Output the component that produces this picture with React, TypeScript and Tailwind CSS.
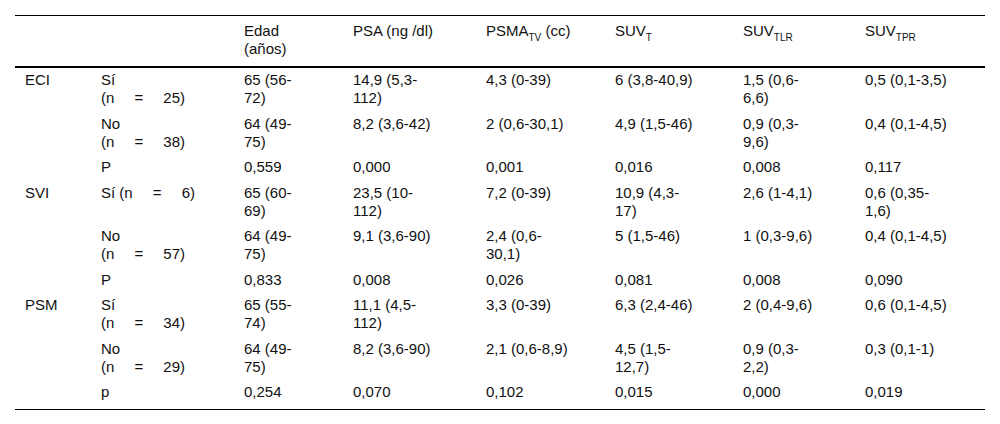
import React from "react";

type Cell = React.ReactNode;

const W = [60, 85, 86, 80, 75, 86];

function NJ({ a, b, c, w = 84 }: { a: string; b: string; c: string; w?: number }) {
  return (
    <div className="flex justify-between" style={{ width: w }}>
      <span>{a}</span>
      <span>{b}</span>
      <span>{c}</span>
    </div>
  );
}

function Group({ n }: { n: string }) {
  return (
    <div>
      <div>Sí</div>
      <NJ a="(n" b="=" c={n} />
    </div>
  );
}
function GroupNo({ n }: { n: string }) {
  return (
    <div>
      <div>No</div>
      <NJ a="(n" b="=" c={n} />
    </div>
  );
}

const rows: { g: string; s: Cell; v: string[] }[] = [
  { g: "ECI", s: <Group n="25)" />, v: ["65 (56-72)", "14,9 (5,3-112)", "4,3 (0-39)", "6 (3,8-40,9)", "1,5 (0,6-6,6)", "0,5 (0,1-3,5)"] },
  { g: "", s: <GroupNo n="38)" />, v: ["64 (49-75)", "8,2 (3,6-42)", "2 (0,6-30,1)", "4,9 (1,5-46)", "0,9 (0,3-9,6)", "0,4 (0,1-4,5)"] },
  { g: "", s: "P", v: ["0,559", "0,000", "0,001", "0,016", "0,008", "0,117"] },
  { g: "SVI", s: <NJ a="Sí (n" b="=" c="6)" w={94} />, v: ["65 (60-69)", "23,5 (10-112)", "7,2 (0-39)", "10,9 (4,3-17)", "2,6 (1-4,1)", "0,6 (0,35-1,6)"] },
  { g: "", s: <GroupNo n="57)" />, v: ["64 (49-75)", "9,1 (3,6-90)", "2,4 (0,6-30,1)", "5 (1,5-46)", "1 (0,3-9,6)", "0,4 (0,1-4,5)"] },
  { g: "", s: "P", v: ["0,833", "0,008", "0,026", "0,081", "0,008", "0,090"] },
  { g: "PSM", s: <Group n="34)" />, v: ["65 (55-74)", "11,1 (4,5-112)", "3,3 (0-39)", "6,3 (2,4-46)", "2 (0,4-9,6)", "0,6 (0,1-4,5)"] },
  { g: "", s: <GroupNo n="29)" />, v: ["64 (49-75)", "8,2 (3,6-90)", "2,1 (0,6-8,9)", "4,5 (1,5-12,7)", "0,9 (0,3-2,2)", "0,3 (0,1-1)"] },
  { g: "", s: "p", v: ["0,254", "0,070", "0,102", "0,015", "0,000", "0,019"] },
];

const Sub = ({ children }: { children: React.ReactNode }) => (
  <sub className="text-[10px] relative top-[1px] align-sub leading-none">{children}</sub>
);

const headers: Cell[] = [
  "Edad (años)",
  "PSA (ng /dl)",
  <>PSMA<Sub>TV</Sub> (cc)</>,
  <>SUV<Sub>T</Sub></>,
  <>SUV<Sub>TLR</Sub></>,
  <>SUV<Sub>TPR</Sub></>,
];

export default function App() {
  return (
    <div
      className="w-[1000px] h-[424px] bg-white pt-[15px] pl-[15px] text-[15px] text-[#111]"
      style={{ fontFamily: '"Liberation Sans", Arial, sans-serif' }}
    >
      <table className="w-[970px] border-collapse table-fixed">
        <colgroup>
          <col className="w-[76px]" />
          <col className="w-[143px]" />
          <col className="w-[109px]" />
          <col className="w-[133px]" />
          <col className="w-[129px]" />
          <col className="w-[128px]" />
          <col className="w-[122px]" />
          <col className="w-[130px]" />
        </colgroup>
        <thead>
          <tr className="border-t border-black border-b-2">
            <th className="pl-[10px] pt-[6px] pb-[8px]" />
            <th />
            {headers.map((h, i) => (
              <th key={i} className="text-left font-normal align-top pl-[10px] pt-[6px] pb-[8px] leading-[18px]">
                <div style={{ width: W[i] }}>{h}</div>
              </th>
            ))}
          </tr>
        </thead>
        <tbody>
          {rows.map((r, ri) => {
            const last = ri === rows.length - 1;
            const pad = last ? "pt-[3px] pb-[7.5px]" : "pt-[3px] pb-[4.5px]";
            return (
              <tr key={ri} className={last ? "border-b border-black" : ""}>
                <td className={`align-top pl-[10px] leading-[18px] ${pad}`}>{r.g}</td>
                <td className={`align-top pl-[10px] leading-[18px] ${pad}`}>{r.s}</td>
                {r.v.map((v, i) => (
                  <td key={i} className={`align-top pl-[10px] leading-[18px] ${pad}`}>
                    <div style={{ width: W[i] }}>{v}</div>
                  </td>
                ))}
              </tr>
            );
          })}
        </tbody>
      </table>
    </div>
  );
}
